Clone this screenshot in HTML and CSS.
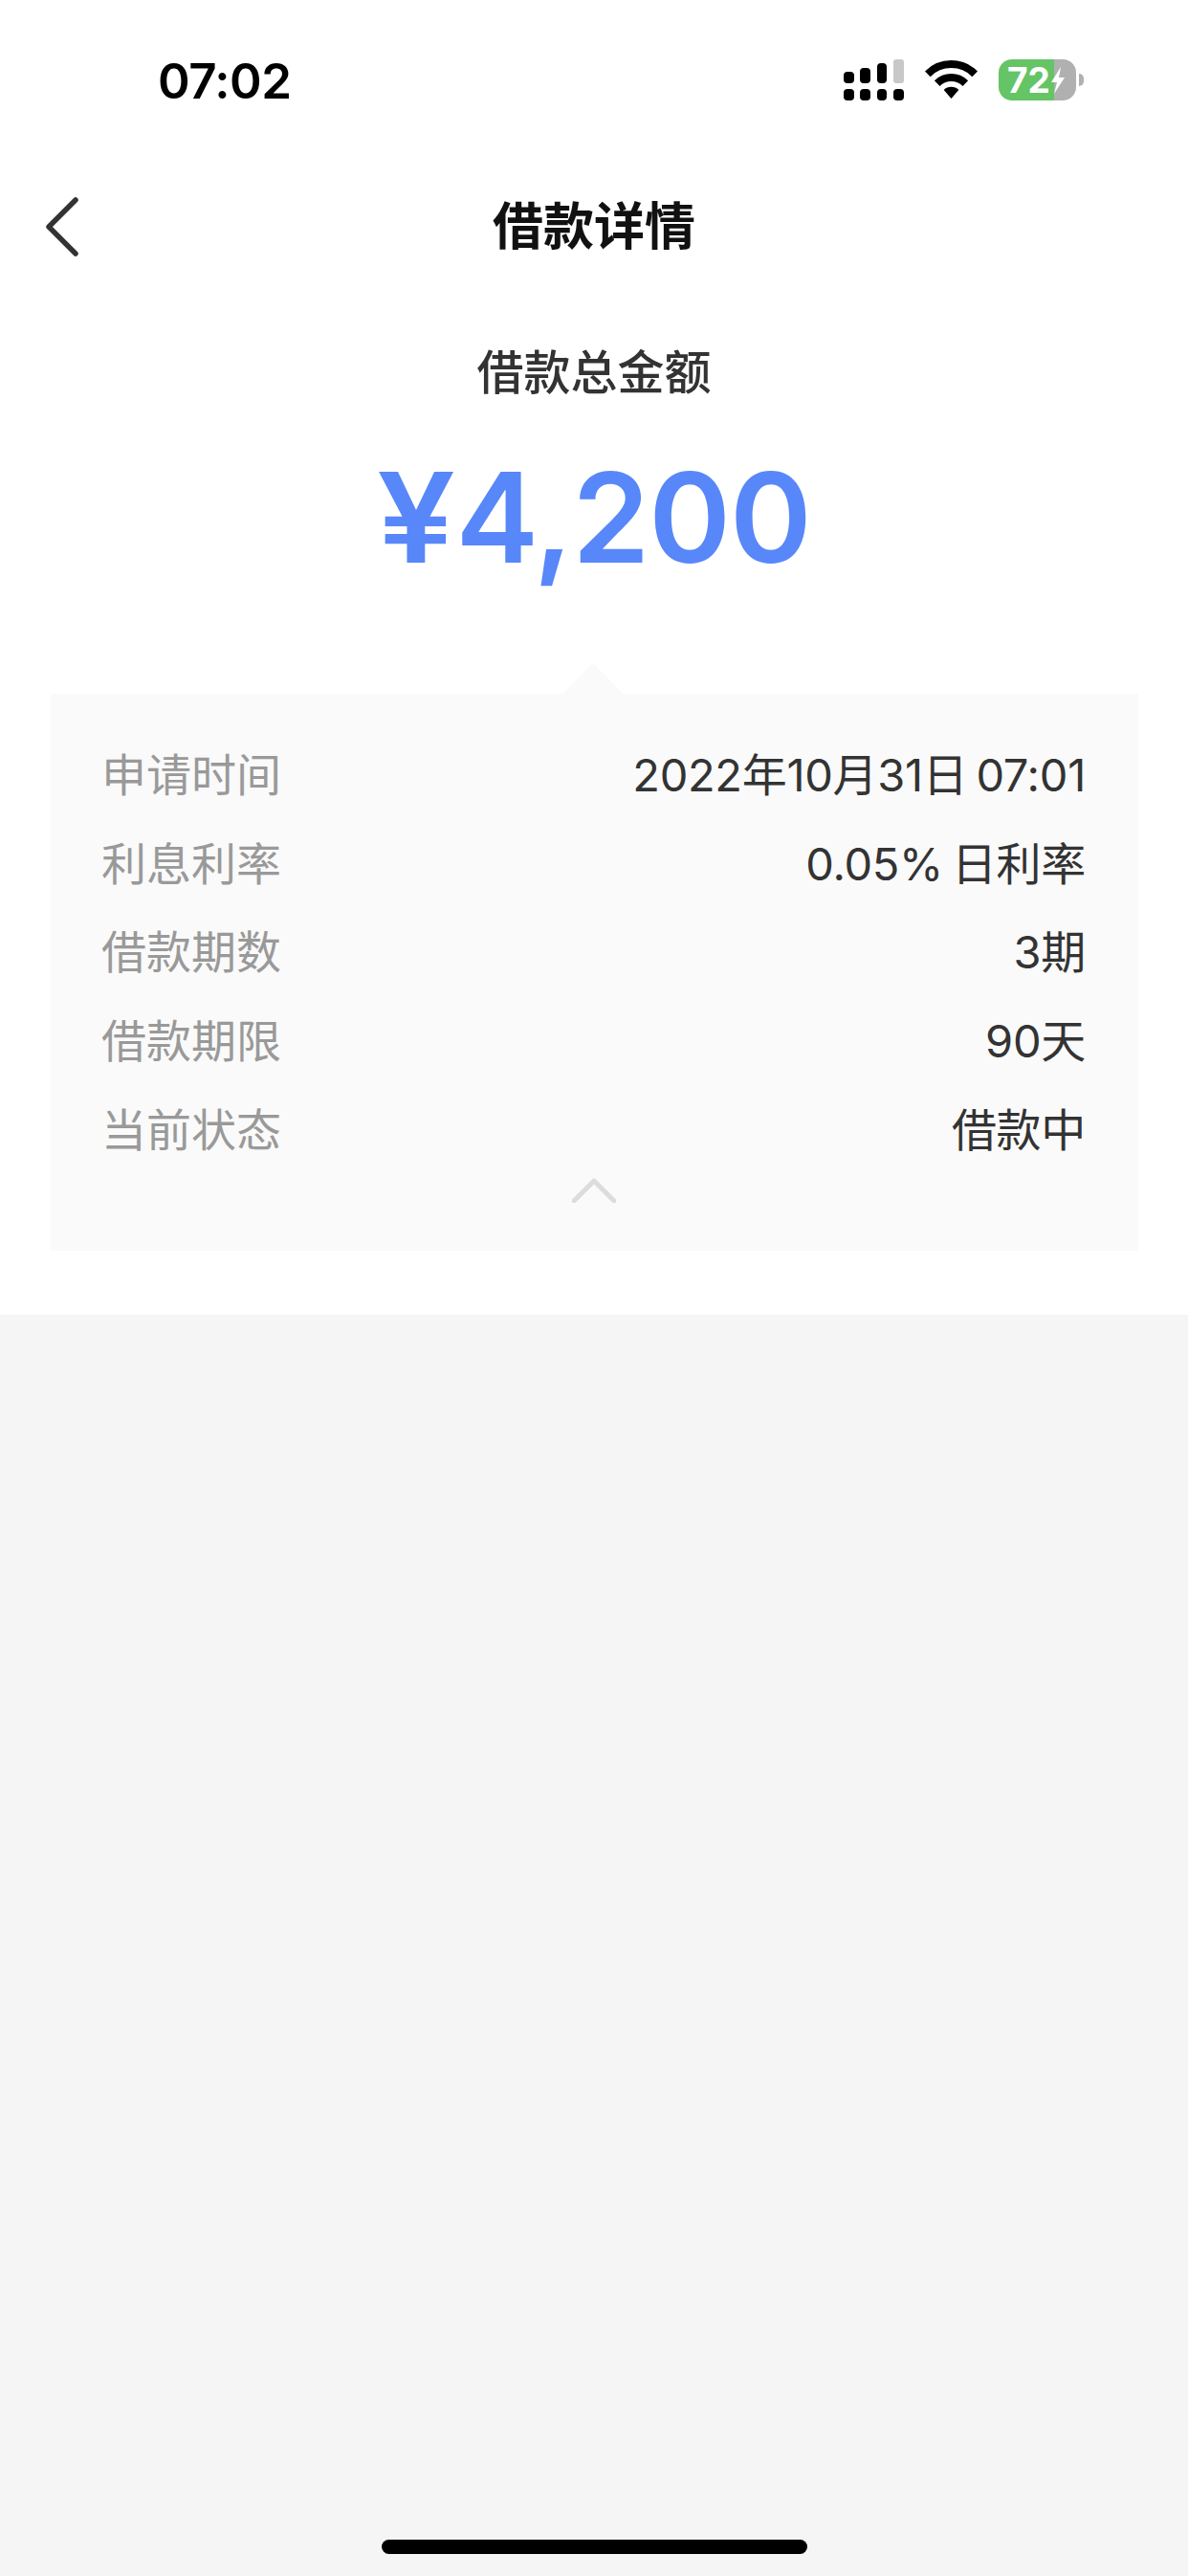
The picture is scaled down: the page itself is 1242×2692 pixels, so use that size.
FILE: index.html
```html
<!DOCTYPE html>
<html lang="zh-CN">
<head>
    <meta charset="UTF-8">
    <meta name="viewport" content="width=device-width, initial-scale=1.0">
    <title>借款详情</title>
    <link rel="stylesheet" href="styles.css">
</head>
<body>
    <div class="page">
        <div class="top">
            <!-- Status bar -->
            <div class="status">
                <span class="time">07:02</span>
                <div class="status-icons">
                    <svg class="signal" width="63" height="43" viewBox="0 0 63 43">
                        <rect x="0" y="13" width="11" height="12" rx="4"/>
                        <rect x="17" y="9" width="11" height="16" rx="4"/>
                        <rect x="35" y="4" width="10" height="21" rx="4"/>
                        <rect x="52" y="0" width="11" height="25" rx="3" fill="#c8c8c8"/>
                        <rect x="0" y="31" width="11" height="12" rx="4"/>
                        <rect x="17" y="31" width="11" height="12" rx="4"/>
                        <rect x="35" y="31" width="10" height="12" rx="4"/>
                        <rect x="52" y="31" width="11" height="12" rx="4"/>
                    </svg>
                    <svg class="wifi" width="55" height="40" viewBox="0 0 55 40">
                        <path d="M2.8 14.3a35 35 0 0 1 49.4 0" fill="none" stroke="#000" stroke-width="8"/>
                        <path d="M12.7 24.2a21 21 0 0 1 29.6 0" fill="none" stroke="#000" stroke-width="8"/>
                        <path d="M27.5 40 19.7 31a11 11 0 0 1 15.6 0z"/>
                    </svg>
                    <div class="battery">
                        <span class="battery-num">72</span>
                        <svg class="bolt" width="14" height="28" viewBox="0 0 14 28">
                            <path d="M10 0 0 16h6l-3 12L14 11H8z" fill="#fff"/>
                        </svg>
                    </div>
                    <span class="battery-nub"></span>
                </div>
            </div>

            <!-- Nav bar -->
            <div class="nav">
                <svg class="back" width="40" height="66" viewBox="0 0 40 66">
                    <path d="M34 5 6 33l28 28" fill="none" stroke="#333" stroke-width="5.5" stroke-linecap="round" stroke-linejoin="round"/>
                </svg>
                <h1 class="title">借款详情</h1>
            </div>

            <!-- Amount -->
            <div class="summary">
                <p class="summary-label">借款总金额</p>
                <p class="amount"><span class="yen">¥</span>4,200</p>
            </div>

            <!-- Detail panel -->
            <div class="panel">
                <svg class="notch" width="64" height="33" viewBox="0 0 64 33">
                    <path d="M0 33 29 3q3-3 6 0l29 30z" fill="#fafafa"/>
                </svg>
                <div class="row"><span class="label">申请时间</span><span class="value">2022年10月31日 07:01</span></div>
                <div class="row"><span class="label">利息利率</span><span class="value">0.05% 日利率</span></div>
                <div class="row"><span class="label">借款期数</span><span class="value">3期</span></div>
                <div class="row"><span class="label">借款期限</span><span class="value">90天</span></div>
                <div class="row"><span class="label">当前状态</span><span class="value">借款中</span></div>
                <svg class="collapse" width="46" height="26" viewBox="0 0 46 26">
                    <path d="M2 24 23 3l21 21" fill="none" stroke="#dcdcdc" stroke-width="5" stroke-linecap="round" stroke-linejoin="round"/>
                </svg>
            </div>
        </div>

        <div class="home-bar"></div>
    </div>
</body>
</html>
```

FILE: styles.css
```css
* { box-sizing: border-box; }
html, body { margin: 0; padding: 0; }
body { font-family: Inter, "Noto Sans CJK SC", sans-serif; color: #333; }
p, h1 { margin: 0; }

.page { display: flex; flex-direction: column; width: 1242px; height: 2692px; background: #f5f5f5; }
.top { background: #fff; height: 1374px; padding-top: 62px; }

.status { display: flex; justify-content: space-between; align-items: flex-start; height: 112px; padding: 0 109px 0 165px; }
.time { font-size: 51px; line-height: 46px; font-weight: 600; letter-spacing: -0.5px; color: #000; }
.status-icons { display: flex; align-items: flex-start; }
.signal { margin-right: 22px; }
.wifi { margin-top: 1px; margin-right: 22px; }
.battery { display: flex; align-items: center; width: 81px; height: 43px; padding-left: 9px; border-radius: 14px; background: linear-gradient(90deg, #65c466 72%, #b0b0b0 72%); }
.battery-num { font-size: 37px; line-height: 43px; font-weight: 700; color: #fff; }
.bolt { margin-left: 1px; }
.battery-nub { width: 5px; height: 13px; margin: 15px 0 0 3px; border-radius: 0 6px 6px 0; background: #b0b0b0; }

.nav { position: relative; display: flex; justify-content: center; align-items: center; height: 126px; }
.back { position: absolute; left: 45px; top: 30px; }
.title { font-size: 53px; line-height: 70px; font-weight: 700; color: #111; }

.summary { text-align: center; }
.summary-label { margin-top: 55px; font-size: 49px; line-height: 70px; font-weight: 500; }
.amount { margin-top: 36px; font-size: 130px; line-height: 160px; font-weight: 600; letter-spacing: -1px; color: #5887f9; }
.yen { display: inline-block; margin-right: 10px; transform: scaleX(1.12); transform-origin: left; }

.panel { position: relative; display: flex; flex-direction: column; width: 1137px; height: 582px; margin: 104px 0 0 53px; padding: 35px 55px 0 53px; background: #fafafa; }
.notch { position: absolute; left: 535px; top: -32px; }
.row { display: flex; justify-content: space-between; align-items: center; height: 92.8px; font-size: 47px; }
.label { color: #999; }
.value { letter-spacing: -0.3px; word-spacing: -4px; color: #333; }
.collapse { align-self: center; margin-top: 7px; }

.home-bar { width: 445px; height: 15px; margin: auto auto 23px; border-radius: 8px; background: #000; }
```
